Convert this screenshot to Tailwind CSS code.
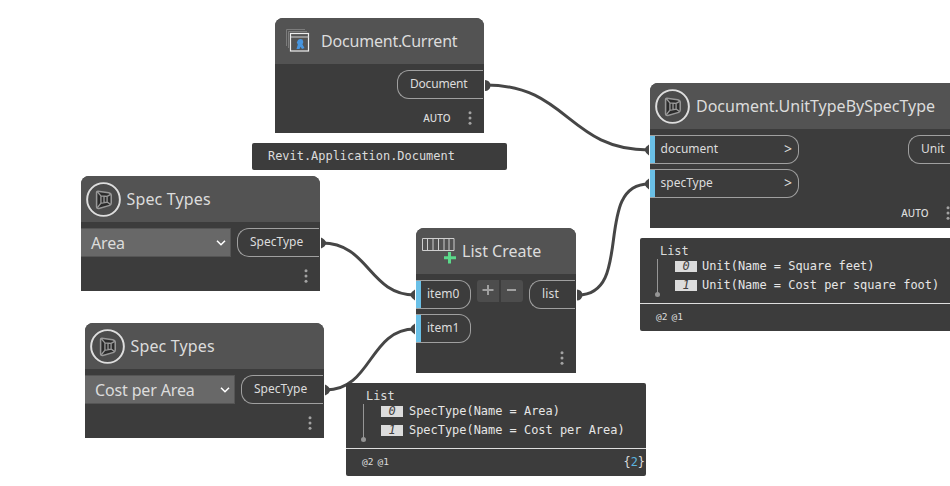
<!DOCTYPE html>
<html lang="en">
<head>
<meta charset="utf-8">
<title>Node graph</title>
<script src="https://cdn.jsdelivr.net/npm/@tailwindcss/browser@4"></script>
</head>
<body class="bg-white">
<svg class="hidden">
  <symbol id="cube" viewBox="0 0 34 34">
    <circle cx="17" cy="17" r="15.900" fill="#4b4b4b" stroke="#dedede" stroke-width="1.900"/>
    <path d="M11.500 9 L22 10.500 Q24.500 11 24.500 13 V20.500 Q24.500 22 23 22.700 L12.500 25.700 Q10.300 26 10.300 24 V10 Q10.300 9 11.500 9Z" fill="#2b2b2b" stroke="#989898" stroke-width="1.500"/>
    <path d="M14.500 13.500 L20.500 14 V19.500 L14.500 20.500 Z M17.500 14 V20 M11 9.500 L14.500 13.500 M24 12 L20.500 14 M24 22 L20.500 19.500 M11 25 L14.500 20.500" fill="none" stroke="#989898" stroke-width="1.300"/>
  </symbol>
  <symbol id="dots" viewBox="0 0 4 14">
    <circle cx="2" cy="1.700" r="1.500" fill="#a3a3a3"/><circle cx="2" cy="7" r="1.500" fill="#a3a3a3"/><circle cx="2" cy="12.300" r="1.500" fill="#a3a3a3"/>
  </symbol>
</svg>
<main class="relative w-[950px] h-[486px] overflow-hidden bg-white font-['Noto_Sans','Open_Sans',sans-serif] text-[12px] text-[#dcdcdc]">
  <svg class="absolute inset-0" width="950" height="486" fill="none" stroke="#464646" stroke-width="3">
    <path d="M486 85 C568 85 568 150 649 150"/>
    <path d="M578 295 C635 295 592 184 649 184"/>
    <path d="M322 243 C369 243 369 295 415 295"/>
    <path d="M326 390 C372 390 369 329 415 329"/>
    <g fill="#464646" stroke="none">
      <path d="M485 80 A5.500 5.500 0 0 1 485 91Z M321 237.500 Q325 239 326.500 243 Q325 247 321 248.500Z M325 384.500 Q329 386 330.500 390 Q329 394 325 395.500Z M577 289.500 A5.500 5.500 0 0 1 577 300.500Z M415 289.500 Q412 291 410 295 Q412 299 415 300.500Z M415 323.500 Q412 325 410 329 Q412 333 415 334.500Z M649 144.500 Q646 146 644.500 150 Q646 154 649 155.500Z M649 178.500 Q646 180 644.500 184 Q646 188 649 189.500Z"/>
    </g>
    <path d="M484.500 78 V92 M320.500 236 V250 M324.500 383 V397 M576.500 288 V302 M415.500 288 V302 M415.500 322 V336 M649.500 143 V157 M649.500 177 V191" stroke="#fff" stroke-width="1"/>
  </svg>

  <section class="absolute left-[275px] top-[18px] w-[209px] h-[115px] rounded-t-lg overflow-hidden bg-[#3c3c3c]">
    <header class="h-[46px] bg-[#535353] flex items-center pl-[10px]">
      <svg width="26" height="26" viewBox="0 0 26 26" fill="none">
        <path d="M1.500 18 V1.500 H20 M3.500 20 V3.500 H22" stroke="#7c7c7c"/>
        <rect x="5.500" y="5.500" width="18" height="17.500" stroke="#eeeeee" stroke-width="1.200"/>
        <path d="M6 9 H24" stroke="#d2d2d2"/>
        <path d="M13 12 Q15 10.500 17.500 11.500 Q19 13.500 17.500 16.500 L19.500 20 L17 21 L15.500 18.800 L14.500 21 L11.500 21 L12.800 16.500 L11.800 14.500 Z" fill="#4795df"/>
      </svg>
      <h2 class="ml-[10px] text-[16px] tracking-[-0.2px] whitespace-nowrap">Document.Current</h2>
    </header>
    <div class="flex justify-end mt-[6px] pr-px">
      <div class="w-[86px] h-[29px] rounded-l-[12px] border border-r-0 border-[#a0a0a0] flex items-center pl-[12px] pb-[2px] tracking-[-0.2px]">Document</div>
    </div>
    <div class="flex justify-end items-center mt-[12px] pr-[12.500px] h-[14px] text-[10px] font-medium gap-[17px]"><span>AUTO</span><svg width="4" height="14"><use href="#dots"/></svg></div>
  </section>

  <div class="absolute left-[252px] top-[143px] w-[255px] h-[27px] rounded-[2px] bg-[#3c3c3c] flex items-center pl-[16px] font-['DejaVu_Sans_Mono',monospace] text-[11.950px]">Revit.Application.Document</div>

  <section class="absolute left-[81px] top-[176px] w-[239px] h-[115px] rounded-t-lg overflow-hidden bg-[#3c3c3c]">
    <header class="h-[46px] bg-[#535353] flex items-center pl-[5px]"><svg width="35" height="35"><use href="#cube"/></svg><h2 class="ml-[5.500px] text-[16px] tracking-[0.150px]">Spec Types</h2></header>
    <div class="flex justify-between mt-[6px] pr-px">
      <div class="w-[150px] h-[29px] bg-[#686868] border-y border-r border-[#555] flex items-center justify-between pl-[10px] pr-[4px] text-[16px] tracking-[-0.150px]"><span>Area</span><svg width="10" height="6" viewBox="0 0 10 6"><path d="M1 .8 L5 4.700 L9 .8" fill="none" stroke="#fff" stroke-width="1.600"/></svg></div>
      <div class="w-[82px] h-[29px] rounded-l-[12px] border border-r-0 border-[#a0a0a0] flex items-center pl-[12px] pb-[2px]">SpecType</div>
    </div>
    <div class="flex justify-end mt-[12px] pr-[12.500px]"><svg width="4" height="14"><use href="#dots"/></svg></div>
  </section>

  <section class="absolute left-[85px] top-[323px] w-[239px] h-[115px] rounded-t-lg overflow-hidden bg-[#3c3c3c]">
    <header class="h-[46px] bg-[#535353] flex items-center pl-[5px]"><svg width="35" height="35"><use href="#cube"/></svg><h2 class="ml-[5.500px] text-[16px] tracking-[0.150px]">Spec Types</h2></header>
    <div class="flex justify-between mt-[6px] pr-px">
      <div class="w-[150px] h-[29px] bg-[#686868] border-y border-r border-[#555] flex items-center justify-between pl-[10px] pr-[4px] text-[16px] tracking-[-0.150px]"><span>Cost per Area</span><svg width="10" height="6" viewBox="0 0 10 6"><path d="M1 .8 L5 4.700 L9 .8" fill="none" stroke="#fff" stroke-width="1.600"/></svg></div>
      <div class="w-[82px] h-[29px] rounded-l-[12px] border border-r-0 border-[#a0a0a0] flex items-center pl-[12px] pb-[2px]">SpecType</div>
    </div>
    <div class="flex justify-end mt-[12px] pr-[12.500px]"><svg width="4" height="14"><use href="#dots"/></svg></div>
  </section>

  <section class="absolute left-[416px] top-[228px] w-[160px] h-[145px] rounded-t-lg overflow-hidden bg-[#3c3c3c]">
    <header class="h-[46px] bg-[#535353] flex items-center pl-[6px]">
      <svg width="35" height="28" viewBox="0 0 35 28" fill="none"><path d="M.5 1.500 H32 V13.500 H.5Z M5.500 1.500 V13.500 M11 1.500 V13.500 M16.500 1.500 V13.500 M22 1.500 V13.500 M27 1.500 V13.500" stroke="#cfcfcf"/><path d="M27.500 15 V26.500 M22 20.700 H34" stroke="#5bd98a" stroke-width="3"/></svg>
      <h2 class="ml-[5px] text-[16px] whitespace-nowrap">List Create</h2>
    </header>
    <div class="flex justify-between items-start mt-[6px] pr-px">
      <div class="flex flex-col gap-[5px]">
        <div class="w-[55px] h-[29px] rounded-r-[12px] border border-l-0 border-[#a0a0a0] flex"><i class="w-[5px] bg-[#6ac0e7]"></i><span class="pl-[6px] leading-[25px]">item0</span></div>
        <div class="w-[55px] h-[29px] rounded-r-[12px] border border-l-0 border-[#a0a0a0] flex"><i class="w-[5px] bg-[#6ac0e7]"></i><span class="pl-[6px] leading-[25px]">item1</span></div>
      </div>
      <div class="flex gap-[2px]">
        <div class="w-[22px] h-[22px] rounded-l-[3px] bg-[#4d4d4d] flex items-center justify-center"><svg width="12" height="12"><path d="M6 0 V10 M.5 5 H11.500" stroke="#a0a0a0" stroke-width="2"/></svg></div>
        <div class="w-[22px] h-[22px] rounded-r-[3px] bg-[#4d4d4d] flex items-center justify-center"><svg width="12" height="12"><path d="M1 5 H10" stroke="#a0a0a0" stroke-width="2"/></svg></div>
      </div>
      <div class="w-[46px] h-[29px] rounded-l-[12px] border border-r-0 border-[#a0a0a0] flex items-center pl-[12px] pb-[2px] tracking-[0.200px]">list</div>
    </div>
    <div class="flex justify-end mt-[8px] pr-[12.500px]"><svg width="4" height="14"><use href="#dots"/></svg></div>
  </section>

  <section class="absolute left-[650px] top-[83px] w-[312px] h-[145px] rounded-t-lg overflow-hidden bg-[#3c3c3c]">
    <header class="h-[46px] bg-[#535353] flex items-center pl-[5px]"><svg width="35" height="35"><use href="#cube"/></svg><h2 class="ml-[6px] text-[16px] whitespace-nowrap">Document.UnitTypeBySpecType</h2></header>
    <div class="flex justify-between items-start mt-[6px] pr-px">
      <div class="flex flex-col gap-[5px]">
        <div class="w-[149px] h-[29px] rounded-r-[12px] border border-l-0 border-[#a0a0a0] flex leading-[25px]"><i class="w-[5px] bg-[#6ac0e7]"></i><span class="pl-[5.500px] grow">document</span><span class="pr-[6px] text-[14px]">&gt;</span></div>
        <div class="w-[149px] h-[29px] rounded-r-[12px] border border-l-0 border-[#a0a0a0] flex leading-[25px]"><i class="w-[5px] bg-[#6ac0e7]"></i><span class="pl-[5.500px] grow">specType</span><span class="pr-[6px] text-[14px]">&gt;</span></div>
      </div>
      <div class="w-[53px] h-[29px] rounded-l-[12px] border border-r-0 border-[#a0a0a0] flex items-center pl-[12px] pb-[2px]">Unit</div>
    </div>
    <div class="flex justify-end items-center mt-[8px] pr-[12.500px] h-[14px] text-[10px] font-medium gap-[17px]"><span>AUTO</span><svg width="4" height="14"><use href="#dots"/></svg></div>
  </section>

  <section class="absolute left-[346px] top-[383px] w-[300px] h-[93px] rounded-[2px] bg-[#3c3c3c] font-['DejaVu_Sans_Mono',monospace] text-[11.950px]">
    <div class="h-[66px] border-b border-[#dedede] pt-[5px] pl-[15px]">
      <div class="pl-[5px] leading-[16px]">List</div>
      <div class="flex">
        <svg width="5" height="38"><path d="M2.500 0 V35" stroke="#969696"/><circle cx="2.500" cy="35.500" r="2.500" fill="#969696"/></svg>
        <div class="pl-[15px] text-[#e6e6e6]">
          <div class="flex items-center h-[15px]"><i class="w-[22px] h-[11px] leading-[11.500px] bg-[#dcdcdc] text-[#404040] text-center mr-[6px]">0</i>SpecType(Name = Area)</div>
          <div class="flex items-center h-[15px] mt-[4px]"><i class="w-[22px] h-[11px] leading-[11.500px] bg-[#dcdcdc] text-[#404040] text-center mr-[6px]">1</i>SpecType(Name = Cost per Area)</div>
        </div>
      </div>
    </div>
    <footer class="h-[27px] flex items-center justify-between pl-[16px] pr-px"><span class="text-[9.500px] flex gap-[4px]"><span>@2</span><span>@1</span></span><span>{<span class="text-[#5bb4e0]">2</span>}</span></footer>
  </section>

  <section class="absolute left-[640px] top-[238px] w-[330px] h-[93px] rounded-[2px] bg-[#3c3c3c] font-['DejaVu_Sans_Mono',monospace] text-[11.950px]">
    <div class="h-[66px] border-b border-[#dedede] pt-[5px] pl-[15px]">
      <div class="pl-[5px] leading-[16px]">List</div>
      <div class="flex">
        <svg width="5" height="38"><path d="M2.500 0 V35" stroke="#969696"/><circle cx="2.500" cy="35.500" r="2.500" fill="#969696"/></svg>
        <div class="pl-[15px] text-[#e6e6e6] whitespace-nowrap">
          <div class="flex items-center h-[15px]"><i class="w-[22px] h-[11px] leading-[11.500px] bg-[#dcdcdc] text-[#404040] text-center mr-[5px]">0</i>Unit(Name = Square feet)</div>
          <div class="flex items-center h-[15px] mt-[4px]"><i class="w-[22px] h-[11px] leading-[11.500px] bg-[#dcdcdc] text-[#404040] text-center mr-[5px]">1</i>Unit(Name = Cost per square foot)</div>
        </div>
      </div>
    </div>
    <footer class="h-[27px] flex items-center pl-[16px] text-[9.500px] gap-[4px]"><span>@2</span><span>@1</span></footer>
  </section>
</main>
</body>
</html>
